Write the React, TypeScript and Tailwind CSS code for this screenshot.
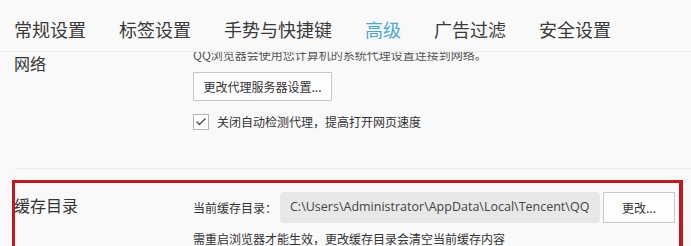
import { Check } from "lucide-react";

const tabs = ["常规设置", "标签设置", "手势与快捷键", "高级", "广告过滤", "安全设置"];

const App = () => {
  return (
    <div
      className="relative h-[246px] w-[691px] overflow-hidden bg-[#f9f9f9] text-[#333]"
      style={{ fontFamily: '"Noto Sans CJK SC", "Noto Sans", sans-serif' }}
    >
      {/* Tabs */}
      <header className="flex h-[52px] items-center gap-[33px] border-b border-[#ebebeb] pl-[14px] pt-[6px]">
        {tabs.map((t) => (
          <span
            key={t}
            className={`text-[18px] leading-none ${t === "高级" ? "text-[#4aa5dc]" : "text-[#3a3a3a]"}`}
          >
            {t}
          </span>
        ))}
      </header>

      {/* Content */}
      <div className="h-[193px] overflow-hidden">
        {/* Network */}
        <div className="flex pl-[14px]">
          <div className="w-[179px] shrink-0 text-[16px] leading-[22px]">网络</div>
          <div className="flex flex-col">
            <p className="mt-[-6px] text-[12px] leading-[18px] text-[#555]">
              QQ浏览器会使用您计算机的系统代理设置连接到网络。
            </p>
            <button className="mt-[8px] h-[29px] w-[139px] border border-[#c8c8c8] bg-[#fdfdfd] text-[12px] text-[#333]">
              更改代理服务器设置...
            </button>
            <label className="mt-[12px] flex items-center gap-[8px] text-[12px] text-[#333]">
              <span className="flex h-[16px] w-[16px] items-center justify-center border border-[#b5b5b5] bg-white">
                <Check className="h-[12px] w-[12px] text-[#444]" strokeWidth={2.5} />
              </span>
              关闭自动检测代理，提高打开网页速度
            </label>
          </div>
        </div>

        <div className="ml-[15px] mt-[37px] border-t border-[#ebebeb]" />

        {/* Cache */}
        <div className="mt-[23px] flex items-start pl-[14px]">
          <div className="w-[179px] shrink-0 pt-[1px] text-[16px] leading-[24px]">缓存目录</div>
          <div className="flex flex-col">
            <div className="flex items-center">
              <span className="w-[87px] text-[12px] text-[#333]">当前缓存目录：</span>
              <div
                className="flex h-[31px] w-[320px] items-center rounded-[4px] bg-[#e8e8e8] pl-[10px] text-[12.5px] text-[#444]"
                style={{ fontFamily: '"Open Sans", sans-serif' }}
              >
                C:\Users\Administrator\AppData\Local\Tencent\QQ
              </div>
              <button className="ml-[3px] h-[31px] w-[72px] border border-[#c8c8c8] bg-[#fdfdfd] text-[12px] text-[#333]">
                更改...
              </button>
            </div>
            <p className="mt-[7px] text-[12px] leading-[18px] text-[#333]">
              需重启浏览器才能生效，更改缓存目录会清空当前缓存内容
            </p>
          </div>
        </div>
      </div>

      {/* annotation box */}
      <div className="absolute left-[12px] top-[180px] h-[80px] w-[671px] border-[3px] border-r-4 border-[#c3161d]" />
    </div>
  );
};

export default App;
